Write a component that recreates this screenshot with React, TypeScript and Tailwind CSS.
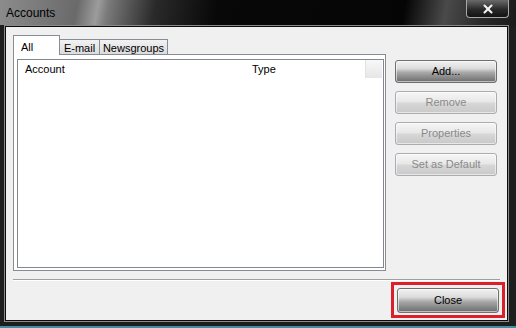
import { X } from "lucide-react";

const ENABLED_BTN =
    "bg-[linear-gradient(to_bottom,#f2f2f2_0%,#dcdcdc_35%,#a8a8a8_55%,#6c6c6c_100%)] border-[#6f6f6f] text-black";
const DISABLED_BTN =
    "bg-[linear-gradient(to_bottom,#f6f6f6_0%,#e8e8e8_45%,#d6d6d6_55%,#c9c9c9_100%)] border-[#a9adb0] text-[#8a8a8a]";

const SideButton = ({ label, enabled }: { label: string; enabled?: boolean }) => (
    <button
        className={`w-[102px] h-[23px] rounded-[3px] border text-[11px] leading-none flex items-center justify-center
            shadow-[inset_0_0_0_1px_rgba(255,255,255,0.55)] ${enabled ? ENABLED_BTN : DISABLED_BTN}`}
    >
        {label}
    </button>
);

const Tab = ({ label, width, selected }: { label: string; width: string; selected?: boolean }) => (
    <div
        className={`${width} flex items-start border border-[#898c95] border-b-0 text-[11px] leading-none
            ${selected
                ? "h-[20px] bg-white pl-[7px] pt-[6px] relative z-10"
                : "h-[16px] mt-[4px] -ml-px bg-[linear-gradient(to_bottom,#f2f2f2,#dadada)] justify-center pt-[3px]"
            }`}
    >
        {label}
    </div>
);

export default function App() {
    return (
        <div className="w-[516px] h-[328px] bg-[#1e1e1e] flex flex-col font-['Liberation_Sans',Arial,sans-serif] border-b-2 border-[#3f8fa0]">
            {/* Title bar */}
            <div className="h-[25px] flex items-start bg-[linear-gradient(100deg,#8c8c8c_0%,#6a6a6a_15%,#9c9c9c_19%,#7a7a7a_21%,#2a2a2a_30%,#080808_42%,#050505_78%,#4a4a4a_86%,#2a2a2a_93%,#1a1a1a_100%)]">
                <span className="pl-[6px] pt-[7px] text-[12px] leading-none text-black">Accounts</span>
                <div className="ml-auto mr-[7px] w-[43px] h-[18px] rounded-b-[4px] border border-t-0 border-[#a8a8a8]
                    bg-[linear-gradient(to_bottom,#6a6a6a,#2a2a2a_55%,#121212)] flex items-center justify-center">
                    <X size={14} strokeWidth={3.5} className="text-[#f4f4f4]" />
                </div>
            </div>

            {/* Client area */}
            <div className="flex-1 ml-[4px] mr-[7px] mb-[4px] border border-[#8a8a8a]">
                <div className="h-full border border-[#0c0c0c] bg-[#f0f0f0] flex flex-col pl-[7px] pt-[8px]">
                    <div className="flex gap-[9px]">
                        {/* Tabs + panel */}
                        <div className="w-[373px] flex flex-col">
                            <div className="flex h-[20px]">
                                <Tab label="All" width="w-[47px]" selected />
                                <Tab label="E-mail" width="w-[41px]" />
                                <Tab label="Newsgroups" width="w-[69px]" />
                            </div>
                            <div className="-mt-px h-[217px] border border-[#898c95] bg-white pl-[3px] pt-[4px] pr-px">
                                <div className="w-[367px] h-[209px] border border-[#828790] bg-white">
                                    <div className="h-[19px] flex text-[11px] leading-none items-center">
                                        <div className="w-[227px] pl-[7px]">Account</div>
                                        <div className="w-[120px] pl-[7px]">Type</div>
                                        <div className="w-[17px] h-[18px] self-start border-l border-[#e2e2e2] bg-[linear-gradient(to_bottom,#f8f8f8,#e6e6e6)]" />
                                    </div>
                                </div>
                            </div>
                        </div>

                        {/* Side buttons */}
                        <div className="mt-[25px] flex flex-col gap-[8px]">
                            <SideButton label="Add..." enabled />
                            <SideButton label="Remove" />
                            <SideButton label="Properties" />
                            <SideButton label="Set as Default" />
                        </div>
                    </div>

                    {/* Separator */}
                    <div className="mt-[8px] mr-[7px] h-[2px] border-t border-[#a0a0a0] border-b border-b-white" />

                    {/* Close */}
                    <div className="self-end mr-[2px] mt-[1px] w-[114px] h-[36px] border-[3px] border-[#dd1f2b] flex items-center justify-center">
                        <button className={`w-[102px] h-[25px] rounded-[3px] border text-[11px] leading-none
                            shadow-[inset_0_0_0_1px_rgba(255,255,255,0.55)] ${ENABLED_BTN}`}>
                            Close
                        </button>
                    </div>
                </div>
            </div>
        </div>
    );
}
